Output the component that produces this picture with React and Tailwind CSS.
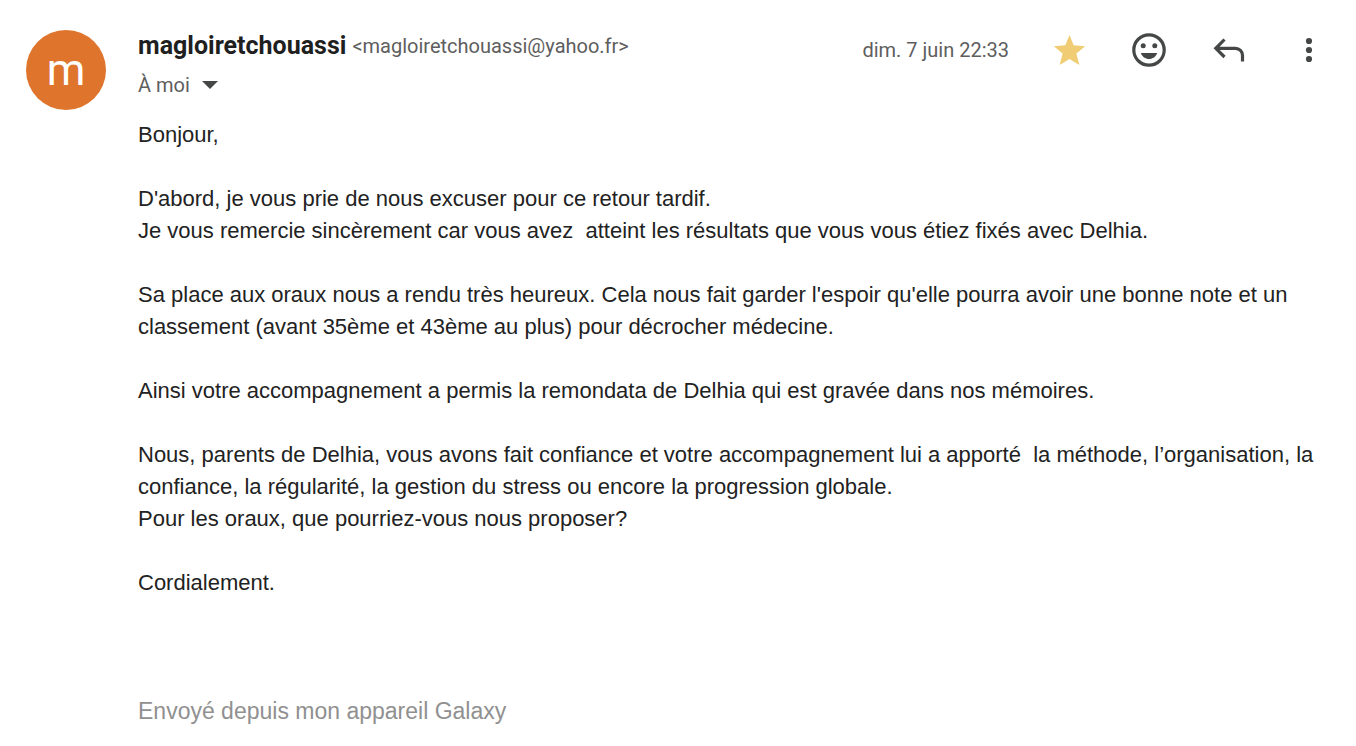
import React, { useState } from 'react';

const message = [
  ['Bonjour,'],
  [
    "D'abord, je vous prie de nous excuser pour ce retour tardif.",
    'Je vous remercie sincèrement car vous avez\u00a0 atteint les résultats que vous vous étiez fixés avec Delhia.',
  ],
  [
    "Sa place aux oraux nous a rendu très heureux. Cela nous fait garder l'espoir qu'elle pourra avoir une bonne note et un classement (avant 35ème et 43ème au plus) pour décrocher médecine.",
  ],
  ['Ainsi votre accompagnement a permis la remondata de Delhia qui est gravée dans nos mémoires.'],
  [
    'Nous, parents de Delhia, vous avons fait confiance et votre accompagnement lui a apporté\u00a0 la méthode, l’organisation, la confiance, la régularité, la gestion du stress ou encore la progression globale.',
    'Pour les oraux, que pourriez-vous nous proposer?',
  ],
  ['Cordialement.'],
];

const StarIcon = () => (
  <svg viewBox="0 0 40 40" className="h-10 w-10" fill="currentColor">
    <path d="M20.500 5l4.200 10.300 11.400.9-8.700 7.300 2.900 11.500-9.800-6.100-9.800 6.100 2.900-11.500-8.700-7.300 11.400-.9z" />
  </svg>
);

const SmileIcon = () => (
  <svg viewBox="0 0 40 40" className="h-10 w-10" fill="currentColor">
    <circle cx="20" cy="20" r="15.2" fill="none" stroke="currentColor" strokeWidth="3.200" />
    <circle cx="14.200" cy="15.800" r="2.500" />
    <circle cx="25.800" cy="15.800" r="2.500" />
    <path d="M11.800 23h16.400c-1.300 3.700-4.500 6-8.200 6s-6.900-2.300-8.200-6z" />
  </svg>
);

const ReplyIcon = () => (
  <svg viewBox="0 0 40 40" className="h-10 w-10" fill="none" stroke="currentColor" strokeWidth="3.200">
    <path d="M15.500 9.500 6.800 18.300l8.700 8.700M7 18.300h19.500a7 7 0 0 1 7 7v6.200" />
  </svg>
);

const MoreIcon = () => (
  <svg viewBox="0 0 40 40" className="h-10 w-10" fill="currentColor">
    <circle cx="20" cy="11" r="3.100" />
    <circle cx="20" cy="20" r="3.100" />
    <circle cx="20" cy="29" r="3.100" />
  </svg>
);

const IconButton = ({ label, className, onClick, children }) => (
  <button
    type="button"
    aria-label={label}
    onClick={onClick}
    className={`flex h-20 w-20 shrink-0 items-center justify-center ${className}`}
  >
    {children}
  </button>
);

const MessageHeader = () => {
  const [starred, setStarred] = useState(true);

  return (
    <header className="flex items-start justify-between font-['Roboto',sans-serif] text-[#5e5e5e]">
      <div className="pt-7">
        <div className="flex items-center gap-1.5">
          <h1 className="text-[25px] leading-9 font-bold text-[#1f1f1f]">magloiretchouassi</h1>
          <span className="text-xl leading-9">&lt;magloiretchouassi@yahoo.fr&gt;</span>
        </div>
        <button type="button" className="flex h-[42px] items-center gap-3 text-xl">
          À moi
          <svg viewBox="0 0 16 8" className="h-2 w-4 fill-[#444746]">
            <path d="M0 0h16L8 8z" />
          </svg>
        </button>
      </div>
      <div className="flex items-center pt-2.5 pr-[7px]">
        <time className="pr-5 text-xl">dim. 7 juin 22:33</time>
        <IconButton
          label="Suivi"
          className={starred ? 'text-[#f0cd74]' : 'text-[#444746]'}
          onClick={() => setStarred(!starred)}
        >
          <StarIcon />
        </IconButton>
        <IconButton label="Ajouter une réaction" className="text-[#444746]">
          <SmileIcon />
        </IconButton>
        <IconButton label="Répondre" className="text-[#444746]">
          <ReplyIcon />
        </IconButton>
        <IconButton label="Plus" className="text-[#444746]">
          <MoreIcon />
        </IconButton>
      </div>
    </header>
  );
};

const App = () => {
  return (
    <main className="flex min-h-screen gap-8 bg-white pl-[26px]">
      <div className="mt-[30px] flex h-20 w-20 shrink-0 items-center justify-center rounded-full bg-[#df752d] font-['Roboto',sans-serif] text-[44px] text-white">
        m
      </div>
      <article className="min-w-0 flex-1">
        <MessageHeader />
        <div className="mt-[13px] space-y-8 pr-8 font-['Liberation_Sans',Arial,sans-serif] text-[22px] leading-8 text-[#222222]">
          {message.map((lines, index) => (
            <p key={index}>
              {lines.map((line) => (
                <span key={line} className="block">{line}</span>
              ))}
            </p>
          ))}
        </div>
        <p className="mt-24 font-['Liberation_Sans',Arial,sans-serif] text-[23px] leading-8 text-[#909090]">
          Envoyé depuis mon appareil Galaxy
        </p>
      </article>
    </main>
  );
};

export default App;
